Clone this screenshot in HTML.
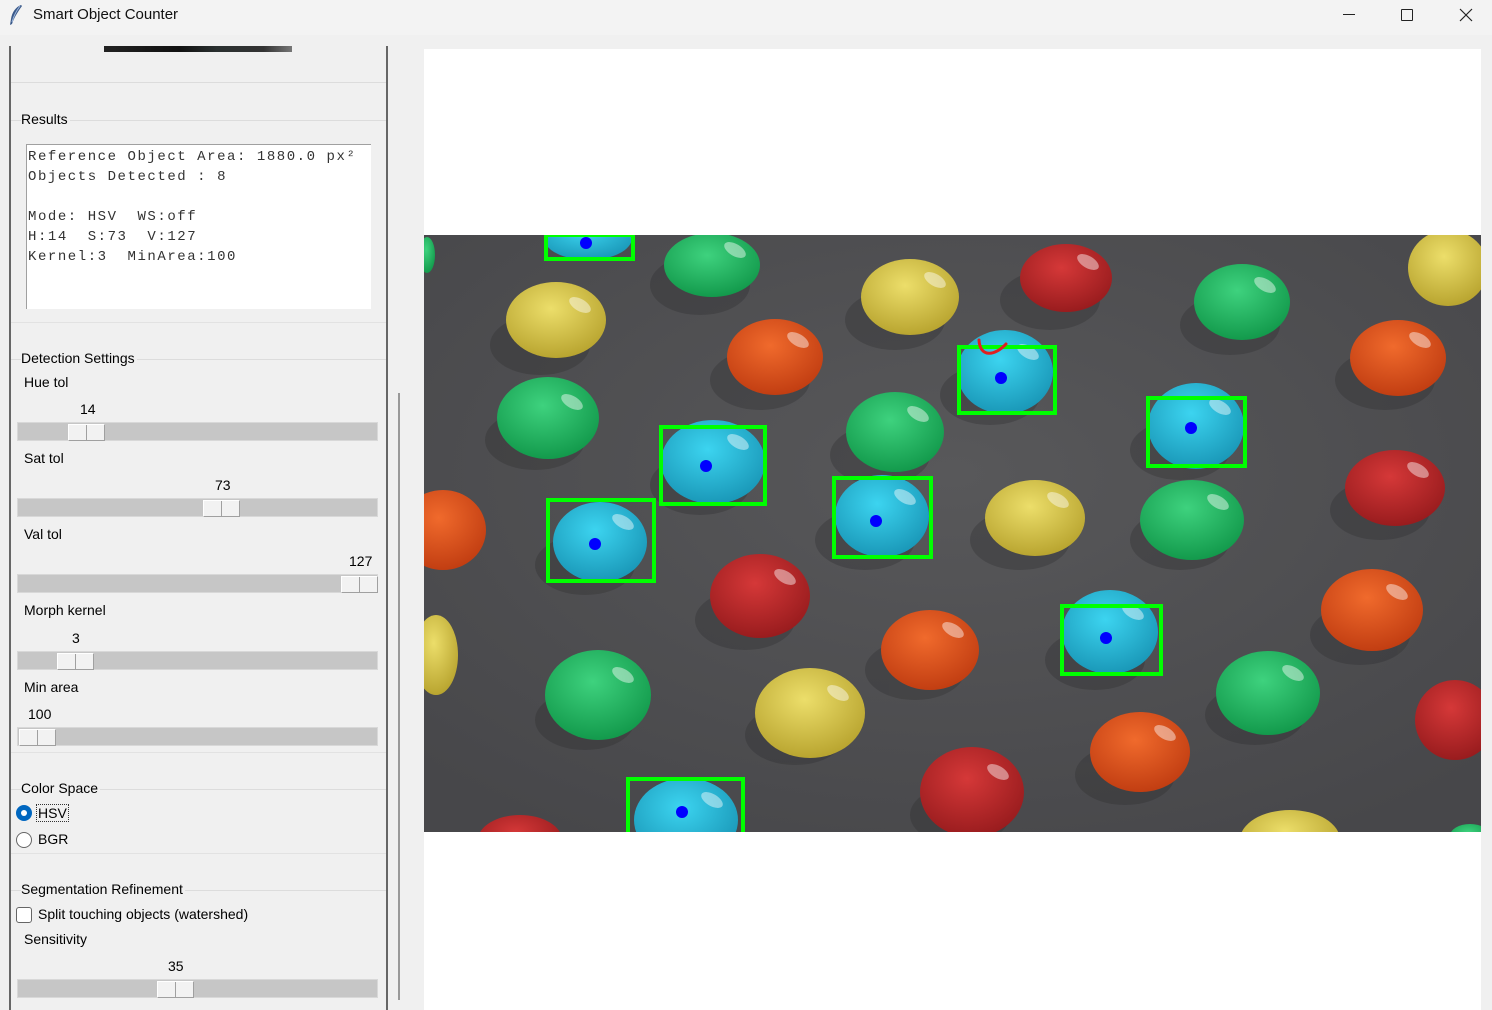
<!DOCTYPE html>
<html><head><meta charset="utf-8"><style>
*{margin:0;padding:0;box-sizing:border-box}
body{width:1492px;height:1010px;background:#f0f0f0;position:relative;overflow:hidden;font-family:"Liberation Sans",sans-serif;font-size:14px;color:#000}
.a{position:absolute}
.t{position:absolute;font-size:14px;white-space:nowrap}
.line{position:absolute;height:1px;background:#dcdcdc}
.tr{position:absolute;left:17px;width:361px;height:19px;background:#c6c6c6;border:1px solid #d8d8d8}
.th{position:absolute;top:1px;width:37px;height:17px;background:#f2f2f2;border:1px solid #a0a0a0;border-top-color:#fff;border-left-color:#fff}
.th:after{content:"";position:absolute;left:17px;top:0;width:1px;height:15px;background:#a0a0a0}
.mono{font-family:"Liberation Mono",monospace;font-size:14px;letter-spacing:1.55px;line-height:20px;color:#333;white-space:pre}
</style></head><body>
<div class="a" style="left:0;top:0;width:1492px;height:35px;background:#f3f3f3"></div>
<svg class="a" style="left:8px;top:4px" width="16" height="22" viewBox="0 0 16 22"><path d="M13 1 C8 3 4 8 3 15 L2 21 L4 20 C6 14 9 9 14 2 Z" fill="#3b5a8a"/><path d="M12 2 C9 6 6 11 4 18" stroke="#9fb8dd" stroke-width="1" fill="none"/></svg>
<div class="t" style="left:33px;top:6px;font-size:15px;color:#111">Smart Object Counter</div>
<div class="a" style="left:1343px;top:14px;width:12px;height:1px;background:#222"></div>
<div class="a" style="left:1401px;top:9px;width:12px;height:12px;border:1px solid #222;border-radius:1px"></div>
<svg class="a" style="left:1459px;top:8px" width="14" height="14"><path d="M1 1L13 13M13 1L1 13" stroke="#222" stroke-width="1.2"/></svg>

<div class="a" style="left:9px;top:46px;width:2px;height:964px;background:#666"></div>
<div class="a" style="left:386px;top:46px;width:2px;height:964px;background:#666"></div>
<div class="a" style="left:398px;top:393px;width:2px;height:607px;background:#999"></div>
<div class="a" style="left:104px;top:46px;width:188px;height:6px;background:linear-gradient(90deg,#222,#111 40%,#2a3030 60%,#333 85%,#777)"></div>
<div class="line" style="left:11px;top:82px;width:375px"></div>

<div class="line" style="left:11px;top:120px;width:375px"></div>
<div class="t" style="left:21px;top:111px;background:#f0f0f0;padding-right:2px">Results</div>
<div class="a" style="left:26px;top:144px;width:345px;height:165px;background:#fff;border-left:1px solid #a0a0a0;border-top:1px solid #a0a0a0"></div>
<div class="a mono" style="left:28px;top:147px">Reference Object Area: 1880.0 px²
Objects Detected : 8

Mode: HSV  WS:off
H:14  S:73  V:127
Kernel:3  MinArea:100</div>
<div class="line" style="left:11px;top:322px;width:375px;background:#e2e2e2"></div>

<div class="line" style="left:11px;top:359px;width:375px"></div>
<div class="t" style="left:21px;top:350px;background:#f0f0f0;padding-right:2px">Detection Settings</div>
<div class="t" style="left:24px;top:374px">Hue tol</div>
<div class="t" style="left:80px;top:401px">14</div>
<div class="tr" style="top:422px"><div class="th" style="left:50px"></div></div>
<div class="t" style="left:24px;top:450px">Sat tol</div>
<div class="t" style="left:215px;top:477px">73</div>
<div class="tr" style="top:498px"><div class="th" style="left:185px"></div></div>
<div class="t" style="left:24px;top:526px">Val tol</div>
<div class="t" style="left:349px;top:553px">127</div>
<div class="tr" style="top:574px"><div class="th" style="left:323px"></div></div>
<div class="t" style="left:24px;top:602px">Morph kernel</div>
<div class="t" style="left:72px;top:630px">3</div>
<div class="tr" style="top:651px"><div class="th" style="left:39px"></div></div>
<div class="t" style="left:24px;top:679px">Min area</div>
<div class="t" style="left:28px;top:706px">100</div>
<div class="tr" style="top:727px"><div class="th" style="left:1px"></div></div>
<div class="line" style="left:11px;top:752px;width:375px;background:#e2e2e2"></div>

<div class="line" style="left:11px;top:789px;width:375px"></div>
<div class="t" style="left:21px;top:780px;background:#f0f0f0;padding-right:2px">Color Space</div>
<div class="a" style="left:16px;top:805px;width:16px;height:16px;border-radius:50%;background:#0067c0"><div class="a" style="left:5px;top:5px;width:6px;height:6px;border-radius:50%;background:#fff"></div></div>
<div class="t" style="left:37px;top:805px;outline:1px dotted #333;padding:0 1px;line-height:16px">HSV</div>
<div class="a" style="left:16px;top:832px;width:16px;height:16px;border-radius:50%;border:1px solid #666;background:#fff"></div>
<div class="t" style="left:38px;top:831px">BGR</div>
<div class="line" style="left:11px;top:853px;width:375px;background:#e2e2e2"></div>

<div class="line" style="left:11px;top:890px;width:375px"></div>
<div class="t" style="left:21px;top:881px;background:#f0f0f0;padding-right:2px">Segmentation Refinement</div>
<div class="a" style="left:16px;top:907px;width:16px;height:16px;border-radius:3px;border:1px solid #666;background:#fff"></div>
<div class="t" style="left:38px;top:906px">Split touching objects (watershed)</div>
<div class="t" style="left:24px;top:931px">Sensitivity</div>
<div class="t" style="left:168px;top:958px">35</div>
<div class="tr" style="top:979px"><div class="th" style="left:139px"></div></div>

<div class="a" style="left:424px;top:49px;width:1057px;height:961px;background:#fff"></div>
<svg class="a" style="left:424px;top:235px" width="1057" height="597" viewBox="424 235 1057 597">
<defs>
<radialGradient id="bg" cx="50%" cy="40%" r="70%"><stop offset="0" stop-color="#58585a"/><stop offset="1" stop-color="#47474a"/></radialGradient>
<radialGradient id="G" cx="45%" cy="35%" r="65%"><stop offset="0" stop-color="#3ed27e"/><stop offset="1" stop-color="#139a4c"/></radialGradient>
<radialGradient id="Y" cx="45%" cy="35%" r="65%"><stop offset="0" stop-color="#ecde6a"/><stop offset="1" stop-color="#b9a530"/></radialGradient>
<radialGradient id="O" cx="45%" cy="35%" r="65%"><stop offset="0" stop-color="#f06a2c"/><stop offset="1" stop-color="#c23e12"/></radialGradient>
<radialGradient id="R" cx="45%" cy="35%" r="65%"><stop offset="0" stop-color="#d53838"/><stop offset="1" stop-color="#991c1e"/></radialGradient>
<radialGradient id="C" cx="45%" cy="35%" r="65%"><stop offset="0" stop-color="#3cd4f0"/><stop offset="1" stop-color="#1a98b8"/></radialGradient>
</defs>
<rect x="424" y="235" width="1057" height="597" fill="url(#bg)"/>
<g fill="#2a2a2c" opacity="0.3">
<ellipse cx="700" cy="285" rx="50" ry="30"/><ellipse cx="895" cy="320" rx="50" ry="30"/><ellipse cx="1050" cy="300" rx="50" ry="30"/><ellipse cx="1230" cy="325" rx="50" ry="30"/><ellipse cx="540" cy="345" rx="50" ry="30"/><ellipse cx="760" cy="380" rx="50" ry="30"/><ellipse cx="990" cy="395" rx="50" ry="30"/><ellipse cx="1385" cy="380" rx="50" ry="30"/><ellipse cx="535" cy="440" rx="50" ry="30"/><ellipse cx="700" cy="485" rx="50" ry="30"/><ellipse cx="880" cy="455" rx="50" ry="30"/><ellipse cx="1180" cy="450" rx="50" ry="30"/><ellipse cx="585" cy="565" rx="50" ry="30"/><ellipse cx="865" cy="540" rx="50" ry="30"/><ellipse cx="1020" cy="540" rx="50" ry="30"/><ellipse cx="1180" cy="540" rx="50" ry="30"/><ellipse cx="1380" cy="510" rx="50" ry="30"/><ellipse cx="745" cy="620" rx="50" ry="30"/><ellipse cx="915" cy="670" rx="50" ry="30"/><ellipse cx="1095" cy="660" rx="50" ry="30"/><ellipse cx="1360" cy="635" rx="50" ry="30"/><ellipse cx="585" cy="720" rx="50" ry="30"/><ellipse cx="795" cy="735" rx="50" ry="30"/><ellipse cx="1255" cy="715" rx="50" ry="30"/><ellipse cx="1125" cy="775" rx="50" ry="30"/><ellipse cx="960" cy="815" rx="50" ry="30"/>
</g>
<ellipse cx="588" cy="238" rx="44" ry="22" fill="url(#C)"/>
<ellipse cx="427" cy="255" rx="8" ry="18" fill="url(#G)"/>
<ellipse cx="712" cy="265" rx="48" ry="32" fill="url(#G)"/>
<ellipse cx="910" cy="297" rx="49" ry="38" fill="url(#Y)"/>
<ellipse cx="1066" cy="278" rx="46" ry="34" fill="url(#R)"/>
<ellipse cx="1242" cy="302" rx="48" ry="38" fill="url(#G)"/>
<ellipse cx="1448" cy="268" rx="40" ry="38" fill="url(#Y)"/>
<ellipse cx="556" cy="320" rx="50" ry="38" fill="url(#Y)"/>
<ellipse cx="775" cy="357" rx="48" ry="38" fill="url(#O)"/>
<ellipse cx="1005" cy="372" rx="48" ry="42" fill="url(#C)"/>
<ellipse cx="1398" cy="358" rx="48" ry="38" fill="url(#O)"/>
<ellipse cx="548" cy="418" rx="51" ry="41" fill="url(#G)"/>
<ellipse cx="713" cy="462" rx="52" ry="42" fill="url(#C)"/>
<ellipse cx="895" cy="432" rx="49" ry="40" fill="url(#G)"/>
<ellipse cx="1196" cy="426" rx="48" ry="43" fill="url(#C)"/>
<ellipse cx="443" cy="530" rx="43" ry="40" fill="url(#O)"/>
<ellipse cx="600" cy="542" rx="47" ry="40" fill="url(#C)"/>
<ellipse cx="882" cy="516" rx="47" ry="41" fill="url(#C)"/>
<ellipse cx="1035" cy="518" rx="50" ry="38" fill="url(#Y)"/>
<ellipse cx="1192" cy="520" rx="52" ry="40" fill="url(#G)"/>
<ellipse cx="1395" cy="488" rx="50" ry="38" fill="url(#R)"/>
<ellipse cx="760" cy="596" rx="50" ry="42" fill="url(#R)"/>
<ellipse cx="930" cy="650" rx="49" ry="40" fill="url(#O)"/>
<ellipse cx="1110" cy="632" rx="48" ry="42" fill="url(#C)"/>
<ellipse cx="1372" cy="610" rx="51" ry="41" fill="url(#O)"/>
<ellipse cx="436" cy="655" rx="22" ry="40" fill="url(#Y)"/>
<ellipse cx="598" cy="695" rx="53" ry="45" fill="url(#G)"/>
<ellipse cx="810" cy="713" rx="55" ry="45" fill="url(#Y)"/>
<ellipse cx="1268" cy="693" rx="52" ry="42" fill="url(#G)"/>
<ellipse cx="1455" cy="720" rx="40" ry="40" fill="url(#R)"/>
<ellipse cx="1140" cy="752" rx="50" ry="40" fill="url(#O)"/>
<ellipse cx="972" cy="792" rx="52" ry="45" fill="url(#R)"/>
<ellipse cx="686" cy="820" rx="52" ry="42" fill="url(#C)"/>
<ellipse cx="520" cy="840" rx="42" ry="25" fill="url(#R)"/>
<ellipse cx="1290" cy="840" rx="50" ry="30" fill="url(#Y)"/>
<ellipse cx="1470" cy="836" rx="20" ry="12" fill="url(#G)"/>
<g fill="#ffffff" opacity="0.45">
<ellipse cx="735" cy="250" rx="12" ry="6" transform="rotate(30 735 250)"/><ellipse cx="935" cy="280" rx="12" ry="6" transform="rotate(30 935 280)"/><ellipse cx="1088" cy="262" rx="12" ry="6" transform="rotate(30 1088 262)"/><ellipse cx="1265" cy="285" rx="12" ry="6" transform="rotate(30 1265 285)"/><ellipse cx="580" cy="305" rx="12" ry="6" transform="rotate(30 580 305)"/><ellipse cx="798" cy="340" rx="12" ry="6" transform="rotate(30 798 340)"/><ellipse cx="1028" cy="352" rx="12" ry="6" transform="rotate(30 1028 352)"/><ellipse cx="1420" cy="340" rx="12" ry="6" transform="rotate(30 1420 340)"/><ellipse cx="572" cy="402" rx="12" ry="6" transform="rotate(30 572 402)"/><ellipse cx="738" cy="442" rx="12" ry="6" transform="rotate(30 738 442)"/><ellipse cx="918" cy="414" rx="12" ry="6" transform="rotate(30 918 414)"/><ellipse cx="1220" cy="407" rx="12" ry="6" transform="rotate(30 1220 407)"/><ellipse cx="623" cy="522" rx="12" ry="6" transform="rotate(30 623 522)"/><ellipse cx="905" cy="497" rx="12" ry="6" transform="rotate(30 905 497)"/><ellipse cx="1058" cy="500" rx="12" ry="6" transform="rotate(30 1058 500)"/><ellipse cx="1218" cy="502" rx="12" ry="6" transform="rotate(30 1218 502)"/><ellipse cx="1418" cy="470" rx="12" ry="6" transform="rotate(30 1418 470)"/><ellipse cx="785" cy="577" rx="12" ry="6" transform="rotate(30 785 577)"/><ellipse cx="953" cy="630" rx="12" ry="6" transform="rotate(30 953 630)"/><ellipse cx="1133" cy="612" rx="12" ry="6" transform="rotate(30 1133 612)"/><ellipse cx="1397" cy="592" rx="12" ry="6" transform="rotate(30 1397 592)"/><ellipse cx="623" cy="675" rx="12" ry="6" transform="rotate(30 623 675)"/><ellipse cx="838" cy="693" rx="12" ry="6" transform="rotate(30 838 693)"/><ellipse cx="1293" cy="673" rx="12" ry="6" transform="rotate(30 1293 673)"/><ellipse cx="1165" cy="733" rx="12" ry="6" transform="rotate(30 1165 733)"/><ellipse cx="998" cy="772" rx="12" ry="6" transform="rotate(30 998 772)"/><ellipse cx="712" cy="800" rx="12" ry="6" transform="rotate(30 712 800)"/>
</g>
<g fill="none" stroke="#00ff00" stroke-width="4">
<rect x="546" y="235" width="87" height="24"/>
<rect x="959" y="347" width="96" height="66"/>
<rect x="661" y="427" width="104" height="77"/>
<rect x="1148" y="398" width="97" height="68"/>
<rect x="548" y="500" width="106" height="81"/>
<rect x="834" y="478" width="97" height="79"/>
<rect x="1062" y="606" width="99" height="68"/>
<rect x="628" y="779" width="115" height="58"/>
</g>
<g fill="#0000ff">
<circle cx="586" cy="243" r="6"/><circle cx="1001" cy="378" r="6"/><circle cx="706" cy="466" r="6"/><circle cx="1191" cy="428" r="6"/><circle cx="595" cy="544" r="6"/><circle cx="876" cy="521" r="6"/><circle cx="1106" cy="638" r="6"/><circle cx="682" cy="812" r="6"/>
</g>
<path d="M979 340 C980 358 995 356 1006 344" stroke="#e02020" stroke-width="3" fill="none" stroke-linecap="round"/>
</svg>
</body></html>
